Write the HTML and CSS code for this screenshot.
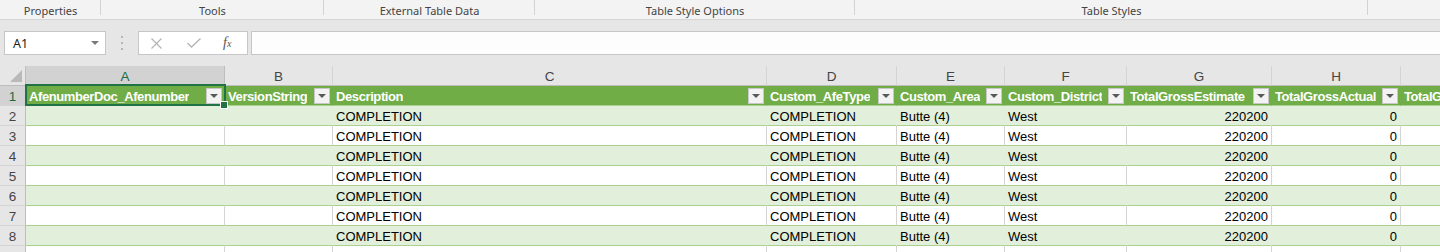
FILE: index.html
```html
<!DOCTYPE html>
<html lang="en">
<head>
    <meta charset="UTF-8">
    <title>Table Design</title>
    <link rel="stylesheet" href="styles.css">
</head>
<body>

    <!-- Ribbon group labels -->
    <div class="ribbon">
        <div class="group g-props">Properties</div>
        <div class="group g-tools">Tools</div>
        <div class="group g-ext">External Table Data</div>
        <div class="group g-opts">Table Style Options</div>
        <div class="group g-styles">Table Styles</div>
        <div class="group g-rest"></div>
    </div>

    <!-- Formula bar -->
    <div class="formula-bar">
        <div class="name-box">
            <span>A1</span>
            <svg width="8" height="4" viewBox="0 0 8 4"><polygon points="0,0 8,0 4,4" fill="#7a7a7a"/></svg>
        </div>
        <svg class="grip" width="3" height="14" viewBox="0 0 3 14">
            <rect x="0" y="0" width="2" height="2" fill="#b5b5b5"/>
            <rect x="0" y="6" width="2" height="2" fill="#b5b5b5"/>
            <rect x="0" y="12" width="2" height="2" fill="#b5b5b5"/>
        </svg>
        <div class="fx-box">
            <svg width="11" height="11" viewBox="0 0 11 11"><path d="M0.5 0.5 L10.5 10.5 M10.5 0.5 L0.5 10.5" stroke="#b4b4b4" stroke-width="1.2" fill="none"/></svg>
            <svg width="14" height="10" viewBox="0 0 14 10"><path d="M0.5 5 L4.5 9 L13.5 0.5" stroke="#b4b4b4" stroke-width="1.3" fill="none"/></svg>
            <span class="fx">f<span>x</span></span>
        </div>
        <div class="formula-input"></div>
    </div>

    <!-- Sheet grid -->
    <div class="sheet">
        <div class="row">
            <div class="corner"><svg width="12" height="12" viewBox="0 0 12 12"><polygon points="12,0 12,12 0,12" fill="#b9b9b9"/></svg></div>
            <div class="ch active">A</div>
            <div class="ch">B</div>
            <div class="ch">C</div>
            <div class="ch">D</div>
            <div class="ch">E</div>
            <div class="ch">F</div>
            <div class="ch">G</div>
            <div class="ch">H</div>
            <div class="ch">I</div>
        </div>

        <div class="row">
            <div class="rh active">1</div>
            <div class="th selected"><span>AfenumberDoc_Afenumber</span><i class="filter"></i></div>
            <div class="th"><span>VersionString</span><i class="filter"></i></div>
            <div class="th"><span>Description</span><i class="filter"></i></div>
            <div class="th"><span>Custom_AfeType</span><i class="filter"></i></div>
            <div class="th"><span>Custom_Area</span><i class="filter"></i></div>
            <div class="th"><span>Custom_District</span><i class="filter"></i></div>
            <div class="th"><span>TotalGrossEstimate</span><i class="filter"></i></div>
            <div class="th"><span>TotalGrossActual</span><i class="filter"></i></div>
            <div class="th"><span>TotalGrossVariance</span><i class="filter"></i></div>
        </div>

        <div class="row band">
            <div class="rh">2</div>
            <div class="c"></div><div class="c"></div>
            <div class="c">COMPLETION</div><div class="c">COMPLETION</div>
            <div class="c">Butte (4)</div><div class="c">West</div>
            <div class="c num">220200</div><div class="c num">0</div><div class="c"></div>
        </div>
        <div class="row">
            <div class="rh">3</div>
            <div class="c"></div><div class="c"></div>
            <div class="c">COMPLETION</div><div class="c">COMPLETION</div>
            <div class="c">Butte (4)</div><div class="c">West</div>
            <div class="c num">220200</div><div class="c num">0</div><div class="c"></div>
        </div>
        <div class="row band">
            <div class="rh">4</div>
            <div class="c"></div><div class="c"></div>
            <div class="c">COMPLETION</div><div class="c">COMPLETION</div>
            <div class="c">Butte (4)</div><div class="c">West</div>
            <div class="c num">220200</div><div class="c num">0</div><div class="c"></div>
        </div>
        <div class="row">
            <div class="rh">5</div>
            <div class="c"></div><div class="c"></div>
            <div class="c">COMPLETION</div><div class="c">COMPLETION</div>
            <div class="c">Butte (4)</div><div class="c">West</div>
            <div class="c num">220200</div><div class="c num">0</div><div class="c"></div>
        </div>
        <div class="row band">
            <div class="rh">6</div>
            <div class="c"></div><div class="c"></div>
            <div class="c">COMPLETION</div><div class="c">COMPLETION</div>
            <div class="c">Butte (4)</div><div class="c">West</div>
            <div class="c num">220200</div><div class="c num">0</div><div class="c"></div>
        </div>
        <div class="row">
            <div class="rh">7</div>
            <div class="c"></div><div class="c"></div>
            <div class="c">COMPLETION</div><div class="c">COMPLETION</div>
            <div class="c">Butte (4)</div><div class="c">West</div>
            <div class="c num">220200</div><div class="c num">0</div><div class="c"></div>
        </div>
        <div class="row band">
            <div class="rh">8</div>
            <div class="c"></div><div class="c"></div>
            <div class="c">COMPLETION</div><div class="c">COMPLETION</div>
            <div class="c">Butte (4)</div><div class="c">West</div>
            <div class="c num">220200</div><div class="c num">0</div><div class="c"></div>
        </div>
        <div class="row">
            <div class="rh"></div>
            <div class="c"></div><div class="c"></div>
            <div class="c"></div><div class="c"></div>
            <div class="c"></div><div class="c"></div>
            <div class="c"></div><div class="c"></div><div class="c"></div>
        </div>
    </div>

</body>
</html>
```

FILE: styles.css
```css
* {
    margin: 0;
    padding: 0;
    box-sizing: border-box;
}

body {
    width: 1440px;
    height: 252px;
    overflow: hidden;
    font-family: "Liberation Sans", Arial, sans-serif;
    background-color: #e6e6e6;
}

/* Ribbon group labels */
.ribbon {
    display: flex;
    height: 20px;
    background-color: #f3f3f3;
    border-bottom: 1px solid #d5d5d5;
}

.group {
    font-family: "Noto Sans", sans-serif;
    font-size: 11px;
    color: #444;
    text-align: center;
    line-height: 21px;
    background: linear-gradient(#d2d2d2, #d2d2d2) right top / 1px 15px no-repeat;
}

.g-props { width: 101px; }
.g-tools { width: 223px; }
.g-ext { width: 211px; }
.g-opts { width: 320px; }
.g-styles { width: 513px; }
.g-rest { flex: 1; background: none; }

/* Formula bar */
.formula-bar {
    display: flex;
    align-items: center;
    height: 46px;
    padding: 0 0 0 4px;
    background-color: #e6e6e6;
}

.name-box {
    display: flex;
    align-items: center;
    justify-content: space-between;
    width: 102px;
    height: 24px;
    padding: 0 6px 0 8px;
    background-color: #fff;
    border: 1px solid #c6c6c6;
    font-family: "Noto Sans", sans-serif;
    font-size: 12.5px;
    color: #222;
}

.grip {
    margin: 0 14px 0 15px;
}

.fx-box {
    display: flex;
    align-items: center;
    width: 110px;
    height: 24px;
    padding: 0 0 0 12px;
    gap: 25px;
    background-color: #fff;
    border: 1px solid #c6c6c6;
}

.fx {
    margin-left: -3px;
    font-family: "Liberation Serif", serif;
    font-style: italic;
    font-size: 14px;
    color: #555;
}

.fx span {
    font-size: 10px;
}

.formula-input {
    flex: 1;
    height: 24px;
    margin-left: 3px;
    margin-right: -2px;
    background-color: #fdfdfd;
    border: 1px solid #c6c6c6;
}

/* Sheet */
.sheet {
    display: grid;
    grid-template-columns: 26px 199px 108px 434px 130px 108px 122px 145px 129px 140px;
    grid-auto-rows: 20px;
    background-color: #fff;
    font-size: 13px;
}

.row {
    display: contents;
}

.row > div {
    display: flex;
    align-items: center;
    overflow: hidden;
    white-space: nowrap;
    border-right: 1px solid #d4d4d4;
    border-bottom: 1px solid #a9d08e;
}

.corner {
    justify-content: flex-end;
    align-items: flex-end !important;
    padding: 0 3px 3px 0;
    background-color: #e6e6e6;
    border-right-color: #bdbdbd !important;
    border-bottom-color: #bdbdbd !important;
}

.ch {
    justify-content: center;
    padding-top: 1px;
    background-color: #e6e6e6;
    color: #444;
    font-size: 13.5px;
    border-bottom-color: #bdbdbd !important;
}

.ch.active {
    background-color: #d2d2d2;
    color: #1e6b3f;
    border-right-color: #bdbdbd !important;
}

.rh {
    justify-content: center;
    padding-top: 1px;
    background-color: #e6e6e6;
    color: #444;
    font-size: 13.5px;
    border-right-color: #bdbdbd !important;
    border-bottom-color: #d4d4d4 !important;
}

.rh.active {
    background-color: #d2d2d2;
    color: #1e6b3f;
}

/* Table header row */
.th {
    justify-content: space-between;
    padding: 1px 2px 0 3px;
    background-color: #70ad47;
    color: #fff;
    font-weight: bold;
    letter-spacing: -0.4px;
    border-right-color: #70ad47 !important;
    border-bottom-color: #a9d08e !important;
}

.th span {
    overflow: hidden;
}

.filter {
    position: relative;
    flex: none;
    width: 16px;
    height: 16px;
    margin-left: 2px;
    background-color: #f3f3f3;
    border: 1px solid #c8c8c8;
}

.filter::after {
    content: "";
    position: absolute;
    left: 3px;
    top: 5px;
    border-left: 4px solid transparent;
    border-right: 4px solid transparent;
    border-top: 4px solid #595959;
}

.selected {
    position: relative;
    overflow: visible !important;
    z-index: 2;
}

.selected::before {
    content: "";
    position: absolute;
    left: -1px;
    right: -2px;
    top: -2px;
    bottom: -1px;
    border: 2px solid #217346;
}

.selected::after {
    content: "";
    position: absolute;
    right: -4px;
    bottom: -4px;
    width: 6px;
    height: 6px;
    background-color: #217346;
    border: 1px solid #fff;
}

/* Body cells */
.c {
    padding: 1px 3px 0;
    color: #000;
}

.num {
    justify-content: flex-end;
}

.band .c {
    background-color: #e2efda;
    border-right-color: #e2efda;
}
```
